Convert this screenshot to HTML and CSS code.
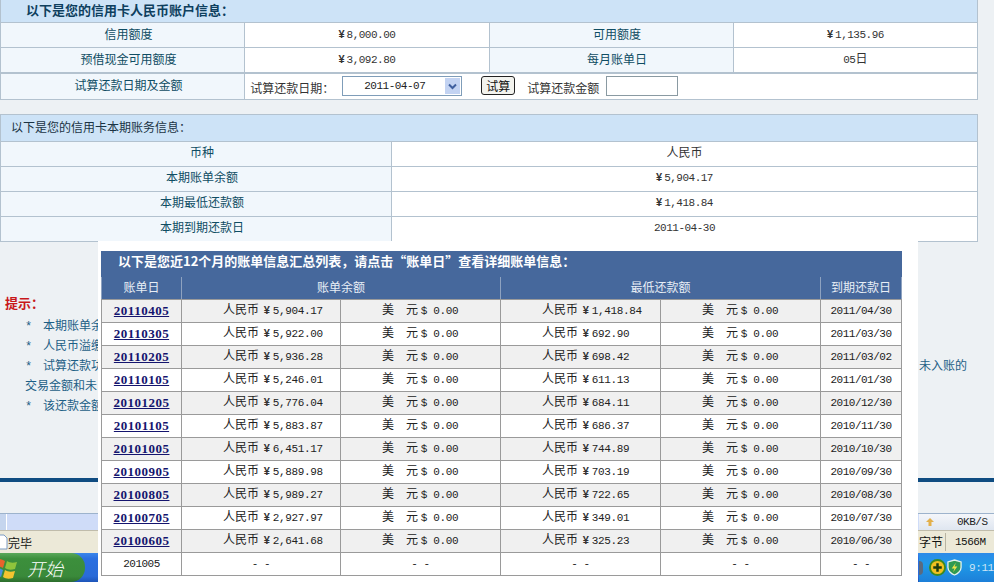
FILE: index.html
```html
<!DOCTYPE html>
<html lang="zh-CN">

<head>
  <meta charset="UTF-8" />
  <title>信用卡账户信息</title>
  <link rel="stylesheet" href="styles.css">
</head>

<body>

  <div class="page">
    <table class="info four">
      <tr>
        <th colspan="4" class="title title-strong">以下是您的信用卡人民币账户信息：</th>
      </tr>
      <tr>
        <td class="label">信用额度</td>
        <td><span class="yen">¥</span><span class="num">8,000.00</span></td>
        <td class="label">可用额度</td>
        <td><span class="yen">¥</span><span class="num">1,135.96</span></td>
      </tr>
      <tr>
        <td class="label">预借现金可用额度</td>
        <td><span class="yen">¥</span><span class="num">3,092.80</span></td>
        <td class="label">每月账单日</td>
        <td><span class="num">05</span>日</td>
      </tr>
      <tr class="trial">
        <td class="label">试算还款日期及金额</td>
        <td colspan="3" class="trial-cell">
          <div class="trial-form">
            <span class="trial-date">试算还款日期：</span>
            <div class="date-select">
              <span class="num">2011-04-07</span>
              <span class="date-arrow">
                <svg width="9" height="7" viewBox="0 0 9 7"><path d="M1 1.5 L4.5 5 L8 1.5" fill="none" stroke="#3f5f9e" stroke-width="2" /></svg>
              </span>
            </div>
            <button type="button" class="trial-btn">试算</button>
            <span class="trial-amount">试算还款金额</span>
            <input type="text" class="trial-input" />
          </div>
        </td>
      </tr>
    </table>

    <table class="info two">
      <colgroup>
        <col class="col-label" />
        <col />
      </colgroup>
      <tr>
        <th colspan="2" class="title">以下是您的信用卡本期账务信息：</th>
      </tr>
      <tr>
        <td class="label">币种</td>
        <td>人民币</td>
      </tr>
      <tr>
        <td class="label">本期账单余额</td>
        <td><span class="yen">¥</span><span class="num">5,904.17</span></td>
      </tr>
      <tr>
        <td class="label">本期最低还款额</td>
        <td><span class="yen">¥</span><span class="num">1,418.84</span></td>
      </tr>
      <tr>
        <td class="label">本期到期还款日</td>
        <td><span class="num">2011-04-30</span></td>
      </tr>
    </table>

    <div class="tips">
      <div class="tips-head">提示：</div>
      <div class="tip"><span class="star">*</span>本期账单余额</div>
      <div class="tip"><span class="star">*</span>人民币溢缴款</div>
      <div class="tip tip-split"><span><span class="star">*</span>试算还款功能</span><span>未入账的</span></div>
      <div class="tip-cont">交易金额和未</div>
      <div class="tip"><span class="star">*</span>该还款金额</div>
    </div>

    <div class="page-bar"></div>
  </div>

  <!-- 浏览器底部 -->
  <div class="browser">
    <div class="load-bar">
      <span class="load-btn"></span>
      <span class="load-fill"></span>
      <span class="load-right">
        <svg class="load-up" width="10" height="10" viewBox="0 0 10 10"><path d="M5 1 L9 5 H6.5 V9 H3.5 V5 H1 Z" fill="#e3b04a" /></svg>
        <span class="load-speed">0KB/S</span>
      </span>
    </div>
    <div class="status-bar">
      <span class="status-left">
        <svg width="8" height="16" viewBox="0 0 8 16"><path d="M-4 1 H4 L7 4 V15 H-4 Z" fill="#fff" stroke="#7d9cc4" /></svg>
        完毕
      </span>
      <span class="status-right">
        <span class="status-bytes">字节</span>
        <span class="status-mem">1566M</span>
      </span>
    </div>
    <div class="taskbar">
      <div class="start">
        <svg width="18" height="22" viewBox="0 0 18 22">
          <path d="M-6 3 C-2 1 1 2 5 4 L3 11 C0 9 -3 9 -7 10 Z" fill="#e8622c" />
          <path d="M7 4 C10 6 13 6 17 5 L15 12 C11 13 8 13 5 11 Z" fill="#8fc43c" />
          <path d="M-7 12 C-3 10 0 11 3 13 L1 20 C-2 18 -5 18 -9 19 Z" fill="#4b8fe0" />
          <path d="M5 13 C8 15 11 15 15 14 L13 21 C9 22 6 22 3 20 Z" fill="#f4c430" />
        </svg>
        <span class="start-text">开始</span>
      </div>
      <div class="tray">
        <span class="tray-edge"></span>
        <svg class="tray-icon" width="17" height="17" viewBox="0 0 18 18">
          <circle cx="9" cy="9" r="8" fill="#f0c020" stroke="#3d8a20" stroke-width="2" />
          <path d="M9 4.5 V13.5 M4.5 9 H13.5" stroke="#1c3c10" stroke-width="2.6" />
        </svg>
        <svg class="tray-icon" width="15" height="17" viewBox="0 0 16 18">
          <path d="M8 1 L15 3 V9 C15 13 11 16 8 17 C5 16 1 13 1 9 V3 Z" fill="#2f9a52" stroke="#e4f2ee" stroke-width="1.4" />
          <path d="M9.5 4 L5 10 H8 L6.5 14 L11 8 H8 Z" fill="#f2e34a" />
        </svg>
        <span class="clock">9:11</span>
      </div>
    </div>
  </div>

  <!-- 弹出层：账单汇总 -->
  <div class="popup">
    <table class="bills">
      <colgroup>
        <col class="col-date" />
        <col class="col-first" />
        <col class="col-amount" />
        <col class="col-amount" />
        <col class="col-amount" />
        <col class="col-due" />
      </colgroup>
      <tr>
        <th colspan="6" class="bills-title">以下是您近12个月的账单信息汇总列表，请点击“账单日”查看详细账单信息：</th>
      </tr>
      <tr class="bills-head">
        <th>账单日</th>
        <th colspan="2">账单余额</th>
        <th colspan="2">最低还款额</th>
        <th>到期还款日</th>
      </tr>
      <tr>
        <td><a href="#">20110405</a></td>
        <td class="amt">人民币 <span class="yen">¥</span><span class="num">5,904.17</span></td>
        <td class="amt">美　元 <span class="num">$ 0.00</span></td>
        <td class="amt">人民币 <span class="yen">¥</span><span class="num">1,418.84</span></td>
        <td class="amt">美　元 <span class="num">$ 0.00</span></td>
        <td><span class="num">2011/04/30</span></td>
      </tr>
      <tr>
        <td><a href="#">20110305</a></td>
        <td class="amt">人民币 <span class="yen">¥</span><span class="num">5,922.00</span></td>
        <td class="amt">美　元 <span class="num">$ 0.00</span></td>
        <td class="amt">人民币 <span class="yen">¥</span><span class="num">692.90</span></td>
        <td class="amt">美　元 <span class="num">$ 0.00</span></td>
        <td><span class="num">2011/03/30</span></td>
      </tr>
      <tr>
        <td><a href="#">20110205</a></td>
        <td class="amt">人民币 <span class="yen">¥</span><span class="num">5,936.28</span></td>
        <td class="amt">美　元 <span class="num">$ 0.00</span></td>
        <td class="amt">人民币 <span class="yen">¥</span><span class="num">698.42</span></td>
        <td class="amt">美　元 <span class="num">$ 0.00</span></td>
        <td><span class="num">2011/03/02</span></td>
      </tr>
      <tr>
        <td><a href="#">20110105</a></td>
        <td class="amt">人民币 <span class="yen">¥</span><span class="num">5,246.01</span></td>
        <td class="amt">美　元 <span class="num">$ 0.00</span></td>
        <td class="amt">人民币 <span class="yen">¥</span><span class="num">611.13</span></td>
        <td class="amt">美　元 <span class="num">$ 0.00</span></td>
        <td><span class="num">2011/01/30</span></td>
      </tr>
      <tr>
        <td><a href="#">20101205</a></td>
        <td class="amt">人民币 <span class="yen">¥</span><span class="num">5,776.04</span></td>
        <td class="amt">美　元 <span class="num">$ 0.00</span></td>
        <td class="amt">人民币 <span class="yen">¥</span><span class="num">684.11</span></td>
        <td class="amt">美　元 <span class="num">$ 0.00</span></td>
        <td><span class="num">2010/12/30</span></td>
      </tr>
      <tr>
        <td><a href="#">20101105</a></td>
        <td class="amt">人民币 <span class="yen">¥</span><span class="num">5,883.87</span></td>
        <td class="amt">美　元 <span class="num">$ 0.00</span></td>
        <td class="amt">人民币 <span class="yen">¥</span><span class="num">686.37</span></td>
        <td class="amt">美　元 <span class="num">$ 0.00</span></td>
        <td><span class="num">2010/11/30</span></td>
      </tr>
      <tr>
        <td><a href="#">20101005</a></td>
        <td class="amt">人民币 <span class="yen">¥</span><span class="num">6,451.17</span></td>
        <td class="amt">美　元 <span class="num">$ 0.00</span></td>
        <td class="amt">人民币 <span class="yen">¥</span><span class="num">744.89</span></td>
        <td class="amt">美　元 <span class="num">$ 0.00</span></td>
        <td><span class="num">2010/10/30</span></td>
      </tr>
      <tr>
        <td><a href="#">20100905</a></td>
        <td class="amt">人民币 <span class="yen">¥</span><span class="num">5,889.98</span></td>
        <td class="amt">美　元 <span class="num">$ 0.00</span></td>
        <td class="amt">人民币 <span class="yen">¥</span><span class="num">703.19</span></td>
        <td class="amt">美　元 <span class="num">$ 0.00</span></td>
        <td><span class="num">2010/09/30</span></td>
      </tr>
      <tr>
        <td><a href="#">20100805</a></td>
        <td class="amt">人民币 <span class="yen">¥</span><span class="num">5,989.27</span></td>
        <td class="amt">美　元 <span class="num">$ 0.00</span></td>
        <td class="amt">人民币 <span class="yen">¥</span><span class="num">722.65</span></td>
        <td class="amt">美　元 <span class="num">$ 0.00</span></td>
        <td><span class="num">2010/08/30</span></td>
      </tr>
      <tr>
        <td><a href="#">20100705</a></td>
        <td class="amt">人民币 <span class="yen">¥</span><span class="num">2,927.97</span></td>
        <td class="amt">美　元 <span class="num">$ 0.00</span></td>
        <td class="amt">人民币 <span class="yen">¥</span><span class="num">349.01</span></td>
        <td class="amt">美　元 <span class="num">$ 0.00</span></td>
        <td><span class="num">2010/07/30</span></td>
      </tr>
      <tr>
        <td><a href="#">20100605</a></td>
        <td class="amt">人民币 <span class="yen">¥</span><span class="num">2,641.68</span></td>
        <td class="amt">美　元 <span class="num">$ 0.00</span></td>
        <td class="amt">人民币 <span class="yen">¥</span><span class="num">325.23</span></td>
        <td class="amt">美　元 <span class="num">$ 0.00</span></td>
        <td><span class="num">2010/06/30</span></td>
      </tr>
      <tr>
        <td><span class="num">201005</span></td>
        <td><span class="num">- -</span></td>
        <td><span class="num">- -</span></td>
        <td><span class="num">- -</span></td>
        <td><span class="num">- -</span></td>
        <td><span class="num">- -</span></td>
      </tr>
    </table>
  </div>

</body>

</html>
```

FILE: styles.css
```css
* {
  margin: 0;
  padding: 0;
  box-sizing: border-box;
}

html,
body {
  height: 582px;
  overflow: hidden;
  background-color: #fff;
  font-family: "Noto Sans CJK SC", "Liberation Sans", sans-serif;
  font-size: 12px;
  color: #333;
}

body {
  position: relative;
}

.page {
  height: 513px;
  background-color: #edf1f4;
  display: flex;
  flex-direction: column;
}

/* 账户信息表 */
.info {
  width: 978px;
  table-layout: fixed;
  border-collapse: collapse;
  background-color: #fff;
  flex: none;
}

.info td,
.info th {
  border: 1px solid #b3c2cf;
  text-align: center;
  font-weight: normal;
  height: 25px;
  line-height: 20px;
  padding: 0 0 2px;
}

.info .title {
  background-color: #cde3f7;
  text-align: left;
  color: #1a3344;
}

.four .title {
  height: 22px;
  padding-left: 25px;
  font-size: 13px;
  font-weight: 700;
  color: #0e3f5e;
  border-top: none;
}

.two {
  margin-top: 14px;
}

.two td {
  line-height: 18px;
  padding-bottom: 4px;
}

.two .title {
  height: 27px;
  padding-left: 10px;
}

.col-label {
  width: 391px;
}

.info .label {
  background-color: #f1f7fc;
  color: #0f4d63;
  padding-left: 12px;
}

.info .trial td {
  height: 26px;
  border-top: 2px solid #b3c2cf;
}

.info .trial-cell {
  text-align: left;
  padding: 0;
}

.trial-form {
  display: flex;
  align-items: center;
  height: 24px;
  padding-left: 5px;
}

.trial-date {
  width: 92px;
  padding-top: 4px;
}

.date-select {
  width: 120px;
  height: 20px;
  border: 1px solid #7f9db9;
  display: flex;
  align-items: center;
  background-color: #fff;
  padding: 0 1px 0 21px;
  justify-content: space-between;
  color: #222;
}

.date-arrow {
  width: 15px;
  height: 16px;
  background-color: #c3d3f2;
  display: flex;
  align-items: center;
  justify-content: center;
}

.trial-btn {
  width: 34px;
  height: 19px;
  margin-left: 19px;
  margin-bottom: 2px;
  font-family: inherit;
  font-size: 12px;
  line-height: 15px;
  color: #111;
  background-color: #f3f3ee;
  border: 1px solid #222;
  border-radius: 3px;
}

.trial-amount {
  margin-left: 12px;
  width: 79px;
  padding-top: 4px;
}

.trial-input {
  width: 72px;
  height: 20px;
  border: 1px solid #8a9aa2;
  background-color: #fff;
}

.num {
  font-family: "Liberation Mono", monospace;
  font-size: 11px;
  letter-spacing: -0.5px;
}

.yen {
  font-family: "Liberation Sans", sans-serif;
  font-weight: 700;
  font-size: 11px;
  margin-right: 2px;
  color: #333;
}

/* 提示 */
.tips {
  padding-top: 52px;
  flex: 1;
  color: #1d5f86;
}

.tips-head {
  color: #c8181a;
  font-weight: 700;
  font-size: 13px;
  padding-left: 5px;
  height: 21px;
  line-height: 18px;
}

.tip {
  padding-left: 25px;
  height: 20px;
  line-height: 20px;
}

.tip-split {
  display: flex;
  justify-content: space-between;
  padding-right: 27px;
}

.tip-cont {
  padding-left: 25px;
  height: 20px;
  line-height: 20px;
}

.star {
  display: inline-block;
  width: 18px;
  font-family: "Liberation Mono", monospace;
}

.page-bar {
  height: 4px;
  margin-bottom: 31px;
  background-color: #0f4c81;
  flex: none;
}

/* 浏览器底部 */
.browser {
  height: 69px;
  display: flex;
  flex-direction: column;
}

.load-bar {
  height: 17px;
  background-color: #cfdcf8;
  border-top: 1px solid #9db3cc;
  display: flex;
  align-items: center;
}

.load-btn {
  width: 7px;
  height: 16px;
  background-color: #c5d5ee;
  border-right: 1px solid #fff;
}

.load-fill {
  flex: 1;
}

.load-right {
  width: 75px;
  height: 100%;
  display: flex;
  align-items: center;
  background: linear-gradient(#f4f6fa, #dfe6f0);
}

.load-up {
  margin-left: 6px;
  flex: none;
}

.load-speed {
  margin-left: 22px;
  font-family: "Liberation Mono", monospace;
  font-size: 11px;
  letter-spacing: -0.5px;
  color: #222;
}

.status-bar {
  height: 23px;
  background-color: #ece9d8;
  display: flex;
  justify-content: space-between;
  align-items: center;
  color: #111;
  border-top: 1px solid #c0bcab;
}

.status-left {
  display: flex;
  align-items: center;
}

.status-right {
  display: flex;
  align-items: center;
  width: 75px;
  height: 100%;
  white-space: nowrap;
}

.status-bytes {
  width: 27px;
  border-right: 1px solid #b8b4a2;
  margin-right: 9px;
  line-height: 18px;
}

.status-mem {
  font-family: "Liberation Mono", monospace;
  font-size: 11px;
  letter-spacing: -0.5px;
}

.taskbar {
  height: 29px;
  background: linear-gradient(#3a86ea, #2a6fe0 20%, #2a6bd8 80%, #1d55b8);
  display: flex;
  justify-content: space-between;
  align-items: center;
}

.start {
  width: 85px;
  height: 100%;
  background: linear-gradient(#5aa85a, #3c8f3c 20%, #3a8a3a 80%, #2d6e2d);
  border-radius: 0 14px 14px 0;
  display: flex;
  align-items: center;
  gap: 9px;
}

.start-text {
  color: #fff;
  font-style: italic;
  font-size: 18px;
  font-weight: 300;
  line-height: 1;
}

.tray {
  display: flex;
  align-items: center;
  width: 75px;
  height: 100%;
  background: linear-gradient(#2d8ae8, #1f9ae8 40%, #1d7fd8);
  overflow: hidden;
  white-space: nowrap;
}

.tray-edge {
  width: 4px;
  height: 14px;
  background-color: #5a6a80;
  border-radius: 0 4px 4px 0;
  margin-right: 6px;
  flex: none;
}

.tray-icon {
  flex: none;
  margin-right: 1px;
}

.clock {
  margin-left: 6px;
  color: #cfe4f6;
  font-family: "Liberation Mono", monospace;
  font-size: 11px;
  letter-spacing: -0.4px;
}

/* 弹出层 */
.popup {
  position: absolute;
  left: 98px;
  top: 241px;
  width: 820px;
  height: 341px;
  background-color: #fff;
  padding: 10px 17px 0 3px;
  overflow: hidden;
}

.bills {
  width: 800px;
  table-layout: fixed;
  border-collapse: collapse;
}

.col-date {
  width: 80px;
}

.col-first {
  width: 159px;
}

.col-amount {
  width: 160px;
}

.col-due {
  width: 81px;
}

.bills td,
.bills th {
  border: 1px solid #9a9a9a;
  height: 23px;
  line-height: 18px;
  padding-bottom: 2px;
  text-align: center;
  font-weight: normal;
  color: #222;
}

.bills .amt {
  text-align: left;
  padding-left: 41px;
}

.amt .yen {
  margin: 0 3px 0 2px;
}

.amt .num {
  letter-spacing: -0.35px;
}

.bills tr:nth-child(odd) td {
  background-color: #f0f0f0;
}

.bills tr:nth-child(even) td {
  background-color: #fff;
}

.bills tr:last-child td {
  background-color: #fff;
}

.bills .bills-title {
  height: 25px;
  background-color: #46689c;
  color: #fff;
  font-size: 13px;
  font-weight: 700;
  text-align: left;
  padding-left: 16px;
  padding-bottom: 6px;
  border-color: #46689c;
}

.bills .bills-head th {
  background-color: #46689c;
  color: #e8eef6;
  border-color: #8ea2c0;
  border-bottom-color: #9a9a9a;
}

.bills a {
  color: #14146e;
  font-family: "Liberation Serif", serif;
  font-weight: 700;
  font-size: 13px;
  letter-spacing: 0.5px;
}
```
